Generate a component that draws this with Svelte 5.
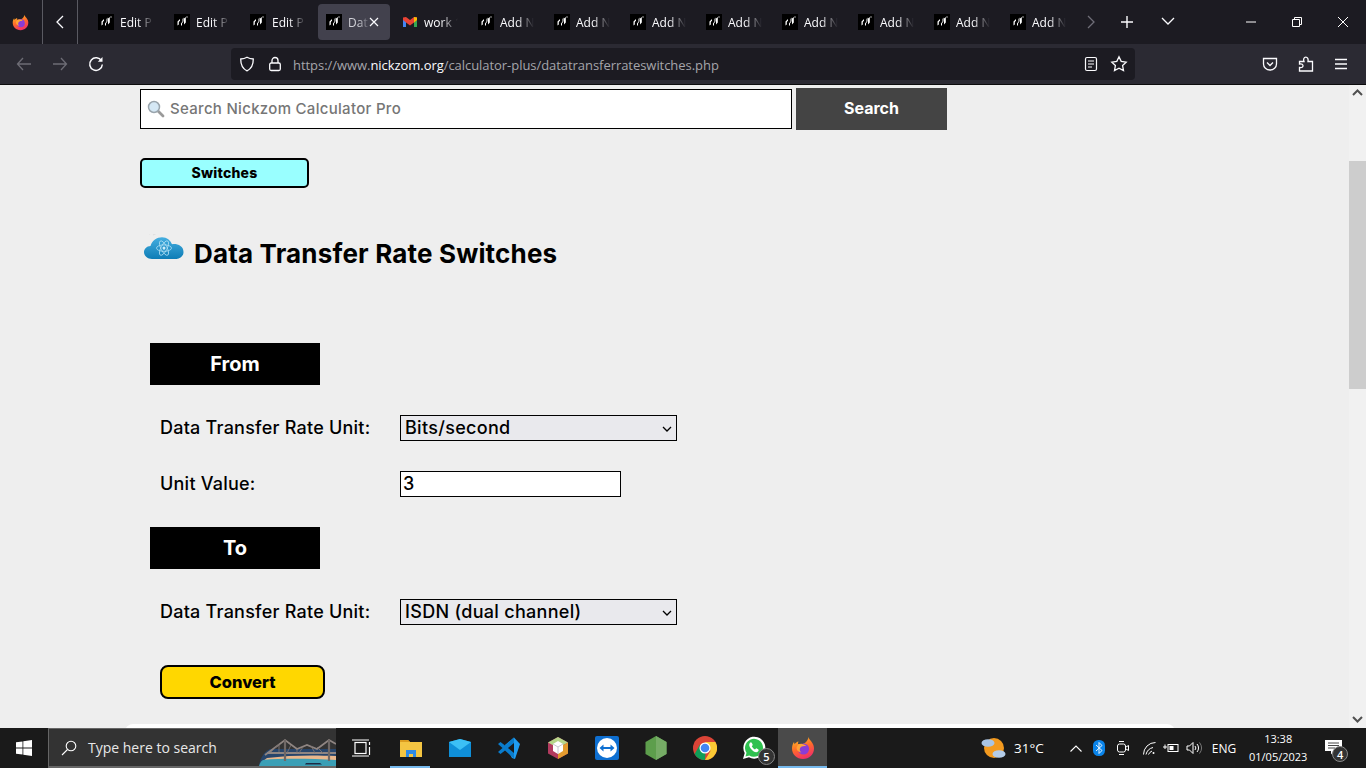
<script lang="ts">
  const tabs = [
    { label: "Edit P" },
    { label: "Edit P" },
    { label: "Edit P" },
    { label: "Dat", active: true },
    { label: "work 1", gmail: true },
    { label: "Add N" },
    { label: "Add N" },
    { label: "Add N" },
    { label: "Add N" },
    { label: "Add N" },
    { label: "Add N" },
    { label: "Add N" },
    { label: "Add N" },
  ];

  const fromUnits = ["Bits/second", "Bytes/second", "Kilobits/second"];
  const toUnits = ["ISDN (dual channel)", "ISDN (single channel)", "Bits/second"];

  let fromUnit = $state(fromUnits[0]);
  let toUnit = $state(toUnits[0]);
  let unitValue = $state("3");
</script>

{#snippet firefox(size)}
  <svg width={size} height={size} viewBox="0 0 24 24">
    <defs>
      <linearGradient id="ffg" x1="0.2" y1="0" x2="0.6" y2="1">
        <stop offset="0" stop-color="#ffc11f" />
        <stop offset="0.5" stop-color="#ff6a2b" />
        <stop offset="1" stop-color="#f02c6b" />
      </linearGradient>
    </defs>
    <path d="M17.5 1c.6 2.2 1.6 3 3 4.8 1.700 2.200 2.500 4.200 2.500 6.700 0 6-4.900 10.500-11 10.500S1 18.500 1 12.500c0-2.500.8-5 2-6.500l.6 2.300C4.500 6.700 6 5.800 7.500 5.500 6.800 7 7 8 7 8c3-.3 5.500.5 7.500-1.500 1.800-1.800 2.800-3.500 3-5.500z" fill="url(#ffg)" />
    <circle cx="12.500" cy="13" r="5.600" fill="#8a3cd6" />
    <path d="M5.500 12c0-2.200 2.300-4.500 5.500-4.100 3 .3 4.500 2.300 4.500 2.300-3-.6-5.500 0-6.500 2-.8 1.700.2 3.300 1.500 4.300C7.500 16.300 5.500 14.500 5.500 12z" fill="#ffa436" />
  </svg>
{/snippet}

{#snippet favicon()}
  <svg class="fav" width="16" height="16" viewBox="0 0 16 16">
    <rect width="16" height="16" fill="#000" />
    <path d="M3.500 11.500V7.500L6 5v1.800L4.800 8v2.500zM7 11.500V9.500l1.500-2V5l1-1.500v3.800L8 9.500v2zM10 10.500V4.500l1.800-1.500v5.500z" fill="#fff" />
    <circle cx="13" cy="3" r="0.700" fill="#ddd" />
  </svg>
{/snippet}

{#snippet gmail()}
  <svg class="fav" width="16" height="16" viewBox="0 0 16 16">
    <path d="M1 4v9h3V7z" fill="#4285f4" />
    <path d="M15 4v9h-3V7z" fill="#34a853" />
    <path d="M1 3.500 4 3l4 3 4-3 3 .5V6l-3 2.500-4 3-4-3L1 6z" fill="#ea4335" />
    <path d="M12 3l3 .5V6l-3 2.500z" fill="#fbbc04" />
  </svg>
{/snippet}

<div class="screen">
  <header class="tabbar">
    <div class="ff-slot">{@render firefox(17)}</div>
    <div class="tab-back">
      <svg width="16" height="16" viewBox="0 0 16 16" fill="none" stroke="#fbfbfe" stroke-width="1.300"><path d="M11 2 5 8l6 6" /></svg>
    </div>
    <div class="tabs">
      {#each tabs as tab}
        <div class="tab" class:active={tab.active}>
          <div class="tab-inner">
            {#if tab.gmail}{@render gmail()}{:else}{@render favicon()}{/if}
            <span class="tab-label">{tab.label}</span>
            {#if tab.active}
              <svg class="tab-close" width="12" height="12" viewBox="0 0 12 12" stroke="#fbfbfe" stroke-width="1.200"><path d="M2 2l8 8M10 2l-8 8" /></svg>
            {/if}
          </div>
        </div>
      {/each}
    </div>
    <div class="tab-tools">
      <svg class="more" width="14" height="16" viewBox="0 0 14 16" fill="none" stroke="#6f6e78" stroke-width="1.300"><path d="M3 2l6 6-6 6" /></svg>
      <svg class="plus" width="14" height="14" viewBox="0 0 14 14" stroke="#fbfbfe" stroke-width="1.400"><path d="M7 1v12M1 7h12" /></svg>
      <svg class="list" width="14" height="10" viewBox="0 0 14 10" fill="none" stroke="#fbfbfe" stroke-width="1.300"><path d="M1 2l6 6 6-6" /></svg>
    </div>
    <div class="win-controls">
      <svg width="12" height="12" viewBox="0 0 12 12" stroke="#fff"><path d="M1 6h10" /></svg>
      <svg width="12" height="12" viewBox="0 0 12 12" fill="none" stroke="#fff"><path d="M1.500 3.500h7v7h-7zM3.500 3.500v-2h7v7h-2" /></svg>
      <svg width="12" height="12" viewBox="0 0 12 12" stroke="#fff"><path d="M1 1l10 10M11 1 1 11" /></svg>
    </div>
  </header>

  <nav class="navbar">
    <div class="nav-buttons">
      <svg width="16" height="16" viewBox="0 0 16 16" fill="none" stroke="#6d6c75" stroke-width="1.300"><path d="M15 8H1.500M7 2 1.500 8 7 14" /></svg>
      <svg width="16" height="16" viewBox="0 0 16 16" fill="none" stroke="#6d6c75" stroke-width="1.300"><path d="M1 8h13.500M9 2l5.500 6L9 14" /></svg>
      <svg width="16" height="16" viewBox="0 0 16 16" fill="none" stroke="#fbfbfe" stroke-width="1.500"><path d="M13.500 5A6.300 6.300 0 1 0 14.300 8.500" /><path d="M14.500 1v4.800H9.800" fill="#fbfbfe" stroke="none" /></svg>
    </div>
    <div class="urlbar">
      <svg class="shield" width="16" height="16" viewBox="0 0 16 16" fill="none" stroke="#fbfbfe" stroke-width="1.300"><path d="M8 1.200c2 1.200 4 1.700 6.300 1.800 0 5-1.200 9.500-6.300 11.800C2.900 12.500 1.700 8 1.700 3 4 2.900 6 2.400 8 1.200z" /></svg>
      <svg class="lock" width="16" height="16" viewBox="0 0 16 16" fill="none" stroke="#fbfbfe" stroke-width="1.300"><rect x="2.700" y="7" width="10.600" height="7.500" rx="1.500" /><path d="M5 7V4.500a3 3 0 0 1 6 0V7" /></svg>
      <span class="url">https://www.<b>nickzom.org</b>/calculator-plus/datatransferrateswitches.php</span>
      <svg class="reader" width="14" height="16" viewBox="0 0 14 16" fill="none" stroke="#fbfbfe" stroke-width="1.200"><rect x="1.500" y="1.500" width="11" height="13" rx="1.500" /><path d="M4 5h6M4 8h6M4 11h4" /></svg>
      <svg class="star" width="18" height="18" viewBox="0 0 18 18" fill="none" stroke="#fbfbfe" stroke-width="1.300"><path d="M9 1.800l2.200 4.600 5 .7-3.600 3.500.9 5L9 13.200l-4.500 2.400.9-5L1.800 7.100l5-.7z" /></svg>
    </div>
    <div class="nav-right">
      <svg width="16" height="16" viewBox="0 0 16 16" fill="none" stroke="#fbfbfe" stroke-width="1.300"><path d="M1.500 2.500h13v5.500a6.500 6 0 0 1-13 0z" /><path d="M5 6.500 8 9.500l3-3" /></svg>
      <svg width="16" height="16" viewBox="0 0 16 16" fill="none" stroke="#fbfbfe" stroke-width="1.300"><path d="M1.500 5.500H6C5 3 6 1.200 7.800 1.200S10.500 3 10 5.500h4.500V15H1.500v-3.500C4 12 5 11 5 9.800S4 7.500 1.500 8z" /></svg>
      <svg width="14" height="14" viewBox="0 0 14 14" stroke="#fbfbfe" stroke-width="1.300"><path d="M1 2.500h12M1 7h12M1 11.500h12" /></svg>
    </div>
  </nav>

  <div class="viewport">
    <main class="page">
      <form class="search" onsubmit={(e) => e.preventDefault()}>
        <div class="search-box">
          <svg class="glass" width="18" height="18" viewBox="0 0 18 18">
            <path d="M10.500 10.500 16 16" stroke="#9a9a9a" stroke-width="2.800" stroke-linecap="round" />
            <circle cx="7" cy="7" r="5.500" fill="#d5e8f5" stroke="#9aa5ad" stroke-width="1.500" />
          </svg>
          <input placeholder="Search Nickzom Calculator Pro" />
        </div>
        <button class="search-btn">Search</button>
      </form>

      <button class="switches">Switches</button>

      <h1 class="title">
        <svg class="cloud" width="42" height="26" viewBox="0 2 42 24" preserveAspectRatio="none">
          <defs>
            <linearGradient id="cloudg" x1="0" y1="0" x2="0" y2="1">
              <stop offset="0" stop-color="#45aee0" />
              <stop offset="1" stop-color="#0e7db6" />
            </linearGradient>
          </defs>
          <path d="M6 2 12 0M10 3l6-3" stroke="#ddd" stroke-width="1" />
          <path d="M9 25C3 25 1 21 1 18.500S3.500 13 7.500 13C9 8 14 5 19 5c5 0 8.500 3 10 6.500 5-.8 11.500 1.500 11.500 7 0 4-3.500 6.500-7 6.500z" fill="url(#cloudg)" />
          <g fill="none" stroke="#a8dcf2" stroke-width="0.800">
            <ellipse cx="21" cy="15" rx="7.500" ry="3" />
            <ellipse cx="21" cy="15" rx="7.500" ry="3" transform="rotate(60 21 15)" />
            <ellipse cx="21" cy="15" rx="7.500" ry="3" transform="rotate(120 21 15)" />
          </g>
          <circle cx="21" cy="15" r="1.500" fill="#cfeefa" />
        </svg>
        <span>Data Transfer Rate Switches</span>
      </h1>

      <div class="band from">From</div>
      <div class="field first">
        <label for="from-unit">Data Transfer Rate Unit:</label>
        <div class="select-wrap">
          <select id="from-unit" bind:value={fromUnit}>
            {#each fromUnits as unit}<option>{unit}</option>{/each}
          </select>
          <svg class="chev" width="10" height="6" viewBox="0 0 10 6" fill="none" stroke="#000" stroke-width="1.300"><path d="M1 1l4 4 4-4" /></svg>
        </div>
      </div>
      <div class="field second">
        <label for="unit-value">Unit Value:</label>
        <input id="unit-value" class="value" bind:value={unitValue} />
      </div>

      <div class="band to">To</div>
      <div class="field first">
        <label for="to-unit">Data Transfer Rate Unit:</label>
        <div class="select-wrap">
          <select id="to-unit" bind:value={toUnit}>
            {#each toUnits as unit}<option>{unit}</option>{/each}
          </select>
          <svg class="chev" width="10" height="6" viewBox="0 0 10 6" fill="none" stroke="#000" stroke-width="1.300"><path d="M1 1l4 4 4-4" /></svg>
        </div>
      </div>

      <button class="convert">Convert</button>
      <div class="card"></div>
    </main>

    <aside class="scrollbar">
      <svg width="11" height="7" viewBox="0 0 11 7" fill="none" stroke="#505050" stroke-width="2"><path d="M1 6l4.500-4.500L10 6" /></svg>
      <div class="thumb"></div>
      <svg class="down" width="11" height="7" viewBox="0 0 11 7" fill="none" stroke="#505050" stroke-width="2"><path d="M1 1l4.500 4.500L10 1" /></svg>
    </aside>
  </div>

  <footer class="taskbar">
    <div class="start">
      <svg width="16" height="16" viewBox="0 0 16 16" fill="#fff"><path d="M0 2.300 6.500 1.400v6.200H0zM7.300 1.300 16 0v7.600H7.300zM0 8.400h6.500v6.200L0 13.700zM7.300 8.400H16V16l-8.700-1.300z" /></svg>
    </div>
    <div class="task-search">
      <svg width="16" height="16" viewBox="0 0 16 16" fill="none" stroke="#fff" stroke-width="1.100"><circle cx="10" cy="6" r="4.800" /><path d="M6.500 9.500 1 15" /></svg>
      <span>Type here to search</span>
      <svg class="bridge" width="77" height="28" viewBox="0 0 77 28">
        <path d="M0 28c1-8 5-14 11-17h66v17z" fill="#27456b" />
        <path d="M8 20c22-3 48-3 69-2v5H4z" fill="#e9b78c" />
        <path d="M0 28c1-3 2-5 4-6 24-2 50-1 73 0v6z" fill="#3a9fb6" />
        <path d="M47 25h14l2 1.500H46z" fill="#1c2a44" />
        <path d="M6 17 26 2l12 9 10-4 10 4 12-9 7 4" fill="none" stroke="#8f8582" stroke-width="1.800" />
        <path d="M8 15h69" stroke="#8f8582" stroke-width="1.800" />
        <path d="M12 14 20 6M20 14V6M26 15V2M32 7l-4 8M38 15V11M44 9l-4 6M52 8l4 7M64 15l-6-6M70 2v15" stroke="#7d7472" stroke-width="0.900" />
        <path d="M26 2v21M70 2v21" stroke="#6f6866" stroke-width="2.200" />
      </svg>
    </div>
    <div class="task-icons">
      <div class="ticon">
        <svg width="20" height="18" viewBox="0 0 20 18" fill="none" stroke="#fff" stroke-width="1.200"><rect x="3" y="3.500" width="11" height="11" /><path d="M0 1h17M0 17h17M17.500 3v3M17.500 8v8" /></svg>
      </div>
      <div class="ticon running">
        <svg width="22" height="18" viewBox="0 0 22 18"><path d="M0 1h8l2 2h12v15H0z" fill="#f4c542" /><path d="M0 1h8l2 2H0z" fill="#dd9d1f" /><path d="M6 11h10v7h-3v-3H9v3H6z" fill="#2e8ae6" /></svg>
      </div>
      <div class="ticon">
        <svg width="22" height="18" viewBox="0 0 22 18"><path d="M0 3 11 0l11 3v15H0z" fill="#0f8fd8" /><path d="M0 3l11 8 11-8-11-3z" fill="#3cc0f5" /></svg>
      </div>
      <div class="ticon">
        <svg width="24" height="24" viewBox="0 0 24 24"><path d="M17 1.500 23 8l-5 15-3-1-7-13z" fill="#1f9cf0" /><path d="M17 1.500 8 9.500 3.500 6 1 8l4.500 4L1 16l2.500 2 4.500-3.500L17 22.500z" fill="#0a7ccc" /><path d="M17 7v10l-6-5z" fill="#1a1a1a" /></svg>
      </div>
      <div class="ticon">
        <svg width="24" height="24" viewBox="0 0 24 24"><path d="M12 1 22 6.500v11L12 23 2 17.500v-11z" fill="#b23a5e" /><path d="M12 1 22 6.500 12 12 2 6.500z" fill="#b6d68a" /><path d="M22 6.500v11L12 23V12z" fill="#e39b2e" /><path d="M7 8l5-3 5 3v7l-5 3-5-3z" fill="#fff" /><path d="M7 8l5 3 5-3M12 11v7" stroke="#c8c8d0" fill="none" /></svg>
      </div>
      <div class="ticon">
        <svg width="24" height="24" viewBox="0 0 24 24"><rect width="24" height="24" rx="2" fill="#0e6fd1" /><circle cx="12" cy="12" r="10" fill="#fff" /><path d="M4.500 12l4-3.500V11h7V8.500l4 3.500-4 3.500V13h-7v2.500z" fill="#0e6fd1" /></svg>
      </div>
      <div class="ticon">
        <svg width="22" height="24" viewBox="0 0 22 24"><path d="M11 0l10.500 6v12L11 24 .5 18V6z" fill="#5d9e4c" /><path d="M11 0l10.500 6v12L11 24z" fill="#76ac66" /></svg>
      </div>
      <div class="ticon">
        <svg width="24" height="24" viewBox="0 0 24 24"><circle cx="12" cy="12" r="12" fill="#db4437" /><path d="M12 24a12 12 0 0 1-10.400-6L7 8.500 12.500 17z" fill="#0f9d58" /><path d="M12 6h10.400A12 12 0 0 1 12 24l5.500-9z" fill="#fcc934" /><circle cx="12" cy="12" r="5.500" fill="#fff" /><circle cx="12" cy="12" r="4.300" fill="#4285f4" /></svg>
      </div>
      <div class="ticon">
        <svg width="24" height="24" viewBox="0 0 24 24"><path d="M1 23l1.700-6A11 11 0 1 1 7 21.300z" fill="#fff" /><path d="M3.500 20.500l1-3.700A9 9 0 1 1 7.300 19.500z" fill="#2fc14f" /><path d="M8.500 6.500c-2 1.500-1.500 4 .8 6.700s5 3.700 6.700 2.300c1-1 .8-2-.3-2.500l-1.500-.8-1.200 1.200c-1.200-.5-2.500-1.800-3.200-3.200l1-1.200-.8-1.800c-.5-1-1.300-1.200-1.500-.7z" fill="#fff" /></svg>
        <span class="count">5</span>
      </div>
      <div class="ticon running selected">{@render firefox(24)}</div>
    </div>
    <div class="tray">
      <svg class="weather" width="26" height="24" viewBox="0 0 26 24">
        <circle cx="13" cy="12" r="10" fill="#f39a1f" />
        <ellipse cx="7" cy="7" rx="6.500" ry="3.800" fill="#a9c4e4" />
        <ellipse cx="18" cy="18" rx="6.500" ry="3.800" fill="#b4cce8" />
      </svg>
      <span class="temp">31°C</span>
      <svg class="caret" width="12" height="7" viewBox="0 0 12 7" fill="none" stroke="#fff" stroke-width="1.100"><path d="M.5 6.500 6 1l5.500 5.500" /></svg>
      <svg class="bt" width="12" height="16" viewBox="0 0 12 16"><rect width="12" height="16" rx="5.500" fill="#0a84ea" /><path d="M3 5l6 5.500-3 3v-11l3 3L3 11" fill="none" stroke="#fff" stroke-width="0.900" /></svg>
      <svg class="cam" width="12" height="16" viewBox="0 0 12 16" fill="none" stroke="#fff" stroke-width="1"><rect x=".5" y="4" width="8" height="8" rx="2" /><path d="M9 7l2.500-1.500v5L9 9M2 1.500h5M2 14.500h5" /></svg>
      <svg class="wifi" width="13" height="13" viewBox="0 0 13 13" fill="none" stroke="#fff" stroke-width="1"><path d="M.5 12.500a12 12 0 0 1 12-12" /><path d="M3 12.500a9.500 9.500 0 0 1 7-7" /><path d="M5.500 12.500a7 7 0 0 1 3.500-3.500" /><circle cx="10.500" cy="11" r="1" fill="#fff" stroke="none" /></svg>
      <svg class="batt" width="16" height="10" viewBox="0 0 16 10" fill="none" stroke="#fff" stroke-width="1"><rect x="5" y="1.500" width="10" height="7" /><rect x="6.500" y="3" width="4" height="4" fill="#fff" stroke="none" /><path d="M0 4h4M2 1.500V6" /></svg>
      <svg class="vol" width="16" height="14" viewBox="0 0 16 14" fill="none" stroke="#fff" stroke-width="1"><path d="M1 5h2.500L7 1.500v11L3.500 9H1z" /><path d="M9 5a3 3 0 0 1 0 4M11 3a6 6 0 0 1 0 8" /><path d="M13.500 1.500a9 9 0 0 1 0 11" stroke="#777" /></svg>
      <span class="lang">ENG</span>
      <div class="clock"><span>13:38</span><span>01/05/2023</span></div>
      <div class="notify">
        <svg width="17" height="15" viewBox="0 0 17 15"><path d="M0 0h17v11H9l-3 3.500V11H0z" fill="#fff" /><path d="M3 3h11M3 5.500h11M3 8h7" stroke="#1a1a1a" stroke-width="0.800" /></svg>
        <span class="count">4</span>
      </div>
    </div>
  </footer>
</div>

<style>
  :global(body) {
    overflow: hidden;
  }
  .screen {
    width: 1366px;
    height: 768px;
    display: flex;
    flex-direction: column;
    overflow: hidden;
    font-family: "Open Sans", "Noto Sans", sans-serif;
  }

  /* browser chrome */
  .tabbar {
    height: 44px;
    flex: none;
    display: flex;
    align-items: center;
    background: #1c1b22;
    color: #fbfbfe;
  }
  .ff-slot {
    width: 43px;
    height: 44px;
    display: flex;
    align-items: center;
    padding: 0 7px 0 5px;
    justify-content: center;
    box-sizing: border-box;
    border-right: 1px solid #5a5a62;
    margin-right: -1px;
  }
  .tab-back {
    width: 35px;
    height: 44px;
    display: flex;
    align-items: center;
    justify-content: center;
    border-right: 1px solid #5a5a62;
    box-sizing: content-box;
  }
  .tabs {
    display: flex;
    margin-left: 12px;
    height: 44px;
  }
  .tab {
    width: 76px;
    height: 44px;
    display: flex;
    align-items: center;
  }
  .tab-inner {
    width: 72px;
    height: 36px;
    padding-left: 8px;
    box-sizing: border-box;
    display: flex;
    align-items: center;
    border-radius: 4px;
  }
  .tab.active .tab-inner {
    background: #42414d;
  }
  .fav {
    flex: none;
  }
  .tab-label {
    margin-left: 6px;
    width: 34px;
    white-space: nowrap;
    font-size: 12px;
    -webkit-mask-image: linear-gradient(to right, #000 50%, transparent 100%);
    mask-image: linear-gradient(to right, #000 50%, transparent 100%);
  }
  .tab.active .tab-label {
    width: 22px;
    color: #cfcfd6;
  }
  .tab-close {
    margin-left: -2px;
    flex: none;
  }
  .tab-tools {
    display: flex;
    align-items: center;
    height: 44px;
    width: 120px;
    flex: none;
  }
  .more {
    margin-left: 7px;
  }
  .plus {
    margin-left: 21px;
  }
  .list {
    margin-left: 27px;
    margin-top: -2px;
  }
  .win-controls {
    margin-left: auto;
    display: flex;
    align-items: center;
    gap: 34px;
    padding-right: 17px;
  }

  .navbar {
    height: 40px;
    flex: none;
    display: flex;
    align-items: center;
    background: #2b2a33;
    border-bottom: 1px solid #0c0c0d;
  }
  .nav-buttons {
    display: flex;
    gap: 20px;
    padding-left: 16px;
    width: 231px;
    box-sizing: border-box;
  }
  .urlbar {
    width: 904px;
    height: 32px;
    box-sizing: border-box;
    padding: 0 7px 0 8px;
    display: flex;
    align-items: center;
    background: #1c1b22;
    border-radius: 4px;
  }
  .lock {
    margin-left: 12px;
  }
  .url {
    margin-left: 10px;
    padding-top: 1px;
    color: #a5a5ab;
    font-size: 13px;
    letter-spacing: -0.05px;
    white-space: nowrap;
  }
  .url b {
    color: #fbfbfe;
    font-weight: 400;
  }
  .reader {
    margin-left: auto;
  }
  .star {
    margin-left: 12px;
  }
  .nav-right {
    display: flex;
    align-items: center;
    gap: 20px;
    margin-left: 127px;
  }

  /* page */
  .viewport {
    height: 643px;
    flex: none;
    display: flex;
    background: #eee;
    overflow: hidden;
  }
  .page {
    flex: 1;
    padding: 3px 0 0 140px;
    box-sizing: border-box;
    font-family: Inter, "Open Sans", sans-serif;
    color: #000;
    position: relative;
    display: flex;
    flex-direction: column;
    align-items: flex-start;
  }
  .search {
    display: flex;
    align-items: center;
    gap: 4px;
  }
  .search-box {
    width: 652px;
    height: 40px;
    box-sizing: border-box;
    border: 1px solid #000;
    background: #fff;
    display: flex;
    align-items: center;
    padding-left: 6px;
  }
  .glass {
    flex: none;
  }
  .search-box input {
    border: none;
    outline: none;
    flex: 1;
    margin-left: 5px;
    padding: 0 0 2px;
    font: 500 15px Inter, sans-serif;
    letter-spacing: 0.3px;
    background: transparent;
  }
  .search-box input::placeholder {
    color: #767676;
    opacity: 1;
  }
  .search-btn {
    width: 151px;
    height: 42px;
    border: none;
    background: #444;
    color: #fff;
    font: 700 16px Inter, sans-serif;
    padding: 0 0 2px;
  }
  .switches {
    width: 169px;
    height: 30px;
    margin-top: 28px;
    box-sizing: border-box;
    background: #9ff;
    border: 2px solid #000;
    border-radius: 5px;
    color: #000;
    font: 800 14px Inter, sans-serif;
    letter-spacing: 0.2px;
    padding: 0 0 2px;
  }
  .title {
    margin: 50px 0 0 3px;
    display: flex;
    align-items: center;
    font: 700 26px Inter, sans-serif;
    letter-spacing: 0.17px;
    height: 30px;
  }
  .cloud {
    flex: none;
    margin: -12px 9px 0 0;
  }
  .band {
    margin-left: 10px;
    width: 170px;
    height: 42px;
    box-sizing: border-box;
    background: #000;
    color: #fff;
    display: flex;
    align-items: center;
    justify-content: center;
    font: 700 20px Inter, sans-serif;
  }
  .band.from {
    margin-top: 75px;
  }
  .band.to {
    margin-top: 30px;
  }
  .field {
    height: 26px;
    margin-left: 20px;
    display: flex;
    align-items: center;
    font-size: 18px;
    font-weight: 500;
    letter-spacing: 0.23px;
  }
  .field.first {
    margin-top: 30px;
  }
  .field.second {
    margin-top: 30px;
  }
  .field label {
    width: 240px;
    flex: none;
    white-space: nowrap;
    padding-bottom: 2px;
  }
  .select-wrap {
    position: relative;
    width: 277px;
    height: 26px;
  }
  select {
    appearance: none;
    width: 100%;
    height: 100%;
    box-sizing: border-box;
    border: 1.500px solid #000;
    border-radius: 0;
    background: #e9e9ed;
    color: #000;
    padding: 0 0 2px 4px;
    font: 500 18px Inter, sans-serif;
    letter-spacing: 0.3px;
  }
  .chev {
    position: absolute;
    right: 5px;
    top: 11px;
    pointer-events: none;
  }
  .value {
    width: 221px;
    height: 26px;
    box-sizing: border-box;
    border: 1.500px solid #000;
    padding: 0 2px 2px;
    font: 500 18px Inter, sans-serif;
    background: #fff;
    color: #000;
    outline: none;
  }
  .convert {
    margin: 40px 0 0 20px;
    width: 165px;
    height: 34px;
    box-sizing: border-box;
    background: #ffd700;
    border: 2px solid #000;
    border-radius: 8px;
    color: #000;
    font: 800 16.500px Inter, sans-serif;
    padding: 0;
  }
  .card {
    position: absolute;
    left: 125px;
    top: 639px;
    width: 1050px;
    height: 20px;
    background: #fff;
    border-radius: 8px 8px 0 0;
  }
  .scrollbar {
    width: 17px;
    flex: none;
    background: #f1f1f1;
    position: relative;
    display: flex;
    flex-direction: column;
    align-items: center;
    padding-top: 4px;
    box-sizing: border-box;
  }
  .thumb {
    width: 17px;
    height: 228px;
    background: #cdcdcd;
    margin-top: 65px;
  }
  .down {
    position: absolute;
    bottom: 5px;
    left: 3px;
  }

  /* windows taskbar */
  .taskbar {
    height: 40px;
    flex: none;
    display: flex;
    align-items: center;
    background: #1a1a1a;
    color: #fff;
    font-size: 12px;
    position: relative;
  }
  .start {
    width: 48px;
    height: 40px;
    display: flex;
    align-items: center;
    justify-content: center;
  }
  .task-search {
    width: 288px;
    height: 40px;
    box-sizing: border-box;
    background: #333;
    border: 1px solid #666;
    border-bottom-width: 2px;
    border-right: none;
    display: flex;
    align-items: center;
    padding-left: 12px;
    position: relative;
    overflow: hidden;
    font-size: 14px;
    color: #e8e8e8;
  }
  .task-search span {
    margin-left: 11px;
  }
  .bridge {
    position: absolute;
    right: 0;
    bottom: 0;
  }
  .task-icons {
    display: flex;
    margin-left: 1px;
  }
  .ticon {
    width: 49px;
    height: 40px;
    display: flex;
    align-items: center;
    justify-content: center;
    position: relative;
    box-sizing: border-box;
  }
  .ticon.running::after {
    content: "";
    position: absolute;
    left: 4px;
    right: 5px;
    bottom: 0;
    height: 2px;
    background: #76b9ed;
  }
  .ticon.selected {
    background: #4a4a4a;
  }
  .ticon.selected::after {
    left: 0;
    right: 0;
  }
  .count {
    position: absolute;
    right: 3px;
    bottom: 3px;
    width: 15px;
    height: 15px;
    border-radius: 50%;
    border: 1px solid #888;
    background: #333;
    font-size: 11px;
    font-weight: 600;
    display: flex;
    align-items: center;
    justify-content: center;
  }
  .tray {
    position: absolute;
    right: 0;
    left: 981px;
    top: 0;
    height: 40px;
    display: flex;
    align-items: center;
  }
  .temp {
    margin-left: 7px;
    font-size: 13.500px;
  }
  .caret {
    margin-left: 26px;
  }
  .bt {
    margin-left: 11px;
  }
  .cam {
    margin-left: 12px;
  }
  .wifi {
    margin-left: 14px;
  }
  .batt {
    margin-left: 7px;
  }
  .vol {
    margin-left: 7px;
  }
  .lang {
    margin-left: 10px;
  }
  .clock {
    margin-left: 13px;
    width: 58px;
    display: flex;
    flex-direction: column;
    align-items: center;
    line-height: 18px;
    font-size: 11px;
  }
  .notify {
    margin-left: 18px;
    position: relative;
    width: 30px;
    height: 24px;
    padding-top: 4px;
    box-sizing: border-box;
  }
  .notify .count {
    right: 7px;
    bottom: -2px;
    width: 14px;
    height: 14px;
  }
</style>
